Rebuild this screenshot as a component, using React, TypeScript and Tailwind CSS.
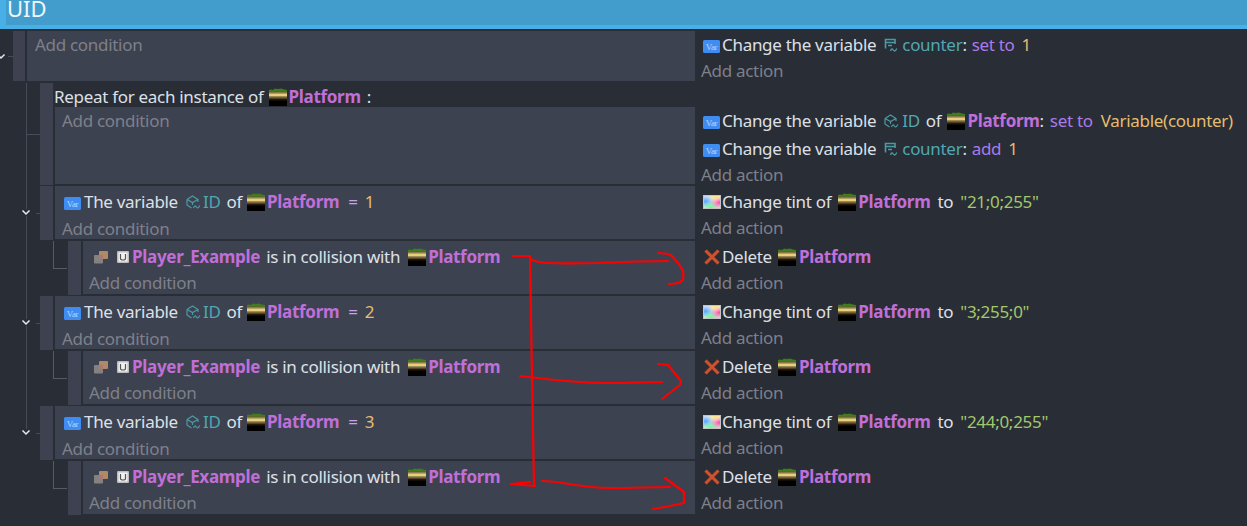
import React from 'react';

const PlatformIcon = () => (
  <svg width="18" height="18" viewBox="0 0 18 18" className="shrink-0">
    <rect y="11" width="18" height="7" fill="#000" />
    <path d="M0 4V2l2-.5 2 .5L6 .5l3 .5 3-.5 3 1 3 .5v2z" fill="#3f7d1e" />
    <rect y="3.500" width="18" height="1" fill="#6a5724" />
    <rect y="4.500" width="18" height="1" fill="#c4ad5e" />
    <rect y="5.500" width="18" height="3" fill="#e6d07e" />
    <rect y="8.500" width="18" height="1" fill="#b0944c" />
    <rect y="9.500" width="18" height="1" fill="#7f602c" />
    <rect y="10.500" width="18" height="1" fill="#4c3717" />
    <rect y="11.500" width="18" height="1" fill="#21170a" />
  </svg>
);

const VarIcon = () => (
  <svg width="17" height="13" viewBox="0 0 17 13" className="shrink-0 translate-y-[1px]">
    <rect width="17" height="13" rx="1.500" fill="#3f8df2" />
    <text x="8.500" y="9.500" textAnchor="middle" fontSize="9" fontFamily="Liberation Serif, serif" fill="#bcd8fb">Var</text>
  </svg>
);

const TintIcon = () => (
  <svg width="18" height="14" viewBox="0 0 18 14" className="shrink-0">
    <defs>
      <radialGradient id="tintBlue" cx="0.1" cy="0.45" r="0.6">
        <stop offset="0" stopColor="#58a4ff" />
        <stop offset="1" stopColor="#58a4ff" stopOpacity="0" />
      </radialGradient>
      <radialGradient id="tintGreen" cx="0.45" cy="1" r="0.6">
        <stop offset="0" stopColor="#5dff86" />
        <stop offset="1" stopColor="#5dff86" stopOpacity="0" />
      </radialGradient>
      <radialGradient id="tintPink" cx="0.95" cy="0.55" r="0.55">
        <stop offset="0" stopColor="#ff4fae" />
        <stop offset="1" stopColor="#ff4fae" stopOpacity="0" />
      </radialGradient>
      <radialGradient id="tintYellow" cx="0.7" cy="0.05" r="0.45">
        <stop offset="0" stopColor="#ffe27a" />
        <stop offset="1" stopColor="#ffe27a" stopOpacity="0" />
      </radialGradient>
    </defs>
    <rect width="18" height="14" fill="#c4c4c4" />
    <rect x="1" y="1" width="16" height="12" fill="#f4f4f4" />
    <rect x="1" y="1" width="16" height="12" fill="url(#tintBlue)" />
    <rect x="1" y="1" width="16" height="12" fill="url(#tintGreen)" />
    <rect x="1" y="1" width="16" height="12" fill="url(#tintPink)" />
    <rect x="1" y="1" width="16" height="12" fill="url(#tintYellow)" />
  </svg>
);

const DeleteIcon = () => (
  <svg width="18" height="18" viewBox="0 0 18 18" className="shrink-0">
    <path d="M2.500 2.500l13 13M15.500 2.500l-13 13" stroke="#3f2f2e" strokeWidth="5" />
    <path d="M2.500 2.500l13 13M15.500 2.500l-13 13" stroke="#cf5230" strokeWidth="3" />
  </svg>
);

const SceneVarIcon = () => (
  <svg width="14" height="14" viewBox="0 0 14 14" fill="none" stroke="#4c9ba4" strokeWidth="1.300" className="shrink-0">
    <path d="M1.500 10.500V1.500h9.500v4.500" strokeWidth="1.600" />
    <path d="M2 4.500h9M4 7.500h4" />
    <path d="M6.500 13c.8-2.500 1.800-2.500 2.800-1s2 1.500 3.500-1.500" />
  </svg>
);

const ObjectVarIcon = () => (
  <svg width="15" height="14" viewBox="0 0 15 14" fill="none" stroke="#4c9ba4" strokeWidth="1.200" className="shrink-0">
    <path d="M1 4.500L6.500 1 12 4.500V7M1 4.500V10l4.500 3M1 4.500l5.500 3 5.500-3M6.500 7.500V10" />
    <path d="M7.500 13c.8-2.500 1.800-2.500 2.800-1s2 1.500 3.500-1.500" />
  </svg>
);

const CollisionIcon = () => (
  <svg width="14" height="13" viewBox="0 0 14 13" className="shrink-0">
    <rect x="5" y="0" width="9" height="8" rx="1" fill="#b08a66" />
    <rect x="0" y="4" width="9" height="8.500" rx="1" fill="#85817f" />
    <rect x="5" y="4" width="4" height="4" fill="#a9797a" />
  </svg>
);

const PlayerIcon = () => (
  <svg width="12" height="12" viewBox="0 0 12 12" className="shrink-0">
    <rect width="12" height="12" rx="1" fill="#bdbdbd" />
    <rect x="1.500" y="1.500" width="9" height="9" fill="#f2f2f2" />
    <path d="M3.500 3v4.500c0 1 .8 1.500 2.500 1.500s2.500-.5 2.500-1.500V3" fill="none" stroke="#555" strokeWidth="1.200" />
  </svg>
);

const Chevron = () => (
  <svg width="10" height="7" viewBox="0 0 10 7" fill="none" stroke="#e8eaee" strokeWidth="1.500">
    <path d="M1.500 1.500L5 5l3.500-3.500" />
  </svg>
);

const Obj = () => <span className="font-bold text-[#c06fd8]">Platform</span>;
const AddLine = ({ label, h = 'h-[24px]' }: { label: string; h?: string }) => (
  <div className={`${h} flex items-center text-[#7d808a]`}>{label}</div>
);
const Line = ({ children, cls = '' }: { children: React.ReactNode; cls?: string }) => (
  <div className={`h-[28px] flex items-center whitespace-nowrap text-[#dde0e8] ${cls}`}>{children}</div>
);

const VarCondition = ({ n }: { n: number }) => (
  <Line cls="pl-[9px] pt-[4px]">
    <VarIcon />
    <span className="ml-[3px]">The variable</span>
    <span className="ml-[8px]"><ObjectVarIcon /></span>
    <span className="ml-[2px] text-[#4fa8b2]">ID</span>
    <span className="ml-[6px]">of</span>
    <span className="ml-[5px]"><PlatformIcon /></span>
    <span className="ml-[2px]"><Obj /></span>
    <span className="ml-[9px] text-[#c9a2e8]">=</span>
    <span className="ml-[7px] text-[#e5bd70]">{n}</span>
  </Line>
);

const Collision = () => (
  <Line cls="pl-[11px] pt-[4px]">
    <CollisionIcon />
    <span className="ml-[9px]"><PlayerIcon /></span>
    <span className="ml-[3px] font-bold text-[#c06fd8]">Player_Example</span>
    <span className="ml-[6px]">is in collision with</span>
    <span className="ml-[8px]"><PlatformIcon /></span>
    <span className="ml-[2px] font-bold text-[#c06fd8]">Platform</span>
  </Line>
);

const Tint = ({ value }: { value: string }) => (
  <Line cls="pl-[2px]">
    <TintIcon />
    <span className="ml-[1px]">Change tint of</span>
    <span className="ml-[7px]"><PlatformIcon /></span>
    <span className="ml-[2px]"><Obj /></span>
    <span className="ml-[7px]">to</span>
    <span className="ml-[7px] text-[#a3c76d]">{value}</span>
  </Line>
);

const Delete = () => (
  <Line cls="pl-[2px]">
    <DeleteIcon />
    <span className="ml-[1px]">Delete</span>
    <span className="ml-[6px]"><PlatformIcon /></span>
    <span className="ml-[3px]"><Obj /></span>
  </Line>
);

const SetVar = ({ verb, value }: { verb: string; value: string }) => (
  <Line cls="pl-[2px]">
    <VarIcon />
    <span className="ml-[2px]">Change the variable</span>
    <span className="ml-[8px]"><SceneVarIcon /></span>
    <span className="ml-[4px] text-[#4fa8b2]">counter</span>
    <span>:</span>
    <span className="ml-[5px] text-[#a97bea]">{verb}</span>
    <span className="ml-[7px] text-[#e5bd70]">{value}</span>
  </Line>
);

// handle + condition cell, the left part of every event
const Event = ({
  indent,
  height,
  head,
  gutter,
  condition,
  action,
}: {
  indent: string;
  height: string;
  head?: React.ReactNode;
  gutter?: React.ReactNode;
  condition: React.ReactNode;
  action: React.ReactNode;
}) => (
  <div className={`flex ${height}`}>
    <div className="flex w-[695px] shrink-0">
      <div className={`relative shrink-0 ${indent}`}>{gutter}</div>
      <div className="w-[13px] shrink-0 mb-[1px] bg-[#3d4150]" />
      <div className="flex-1 min-w-0 flex flex-col ml-[1px]">
        {head}
        <div className="flex-1 bg-[#3d4250] ml-[1px] mb-[2px]">{condition}</div>
      </div>
    </div>
    <div className="flex-1 pl-[6px] pt-[2px]">{action}</div>
  </div>
);

const Branch = ({ last }: { last?: boolean }) => (
  <>
    <div className={`absolute left-[26px] top-0 w-px bg-[#474b58] ${last ? 'h-[24px]' : 'bottom-0'}`} />
    <div className="absolute right-0 top-[27px] h-px w-[4px] bg-[#474b58]" />
    <div className="absolute left-[21px] top-[23px] bg-[#292d36] flex">
      <Chevron />
    </div>
  </>
);

const SubBranch = ({ last }: { last?: boolean }) => (
  <>
    {!last && <div className="absolute left-[26px] top-0 bottom-0 w-px bg-[#474b58]" />}
    <div className="absolute left-[53px] top-0 h-[28px] w-[14px] border-l border-b border-[#565a68]" />
  </>
);

const Group = ({ n, tint, last }: { n: number; tint: string; last?: boolean }) => (
  <>
    <Event
      indent="w-[40px]"
      height="h-[55px]"
      gutter={<Branch last={last} />}
      condition={
        <>
          <VarCondition n={n} />
          <AddLine label="Add condition" h="h-[25px] pl-[7px] pt-[4px]" />
        </>
      }
      action={
        <>
          <Tint value={tint} />
          <AddLine label="Add action" />
        </>
      }
    />
    <Event
      indent="w-[68px]"
      height="h-[55px]"
      gutter={<SubBranch last={last} />}
      condition={
        <>
          <Collision />
          <AddLine label="Add condition" h="h-[25px] pl-[6px] pt-[3px]" />
        </>
      }
      action={
        <>
          <Delete />
          <AddLine label="Add action" />
        </>
      }
    />
  </>
);

export default function App() {
  return (
    <div className="relative h-[526px] w-[1247px] overflow-hidden bg-[#292d36] font-['Noto_Sans',sans-serif] text-[17px] tracking-[-0.3px]">
      <div className="h-[29px] border-l-[6px] border-b-4 border-[#48b0e6] bg-[#429dcc] pl-[1px] text-[22px] leading-[17px] tracking-normal text-[#eef7fc]">
        UID
      </div>
      <div className="pt-[2px]">
        <div className="flex h-[52px]">
          <div className="flex w-[695px] shrink-0">
            <div className="relative w-[13px] shrink-0">
              <div className="absolute -left-[4px] top-[22px]"><Chevron /></div>
              <div className="absolute left-[8px] top-[25px] h-px w-[5px] bg-[#474b58]" />
            </div>
            <div className="w-[12px] shrink-0 bg-[#3d4150] mb-[2px]" />
            <div className="ml-[2px] flex-1 bg-[#3d4250] mb-[2px] pl-[8px]">
              <AddLine label="Add condition" h="h-[28px]" />
            </div>
          </div>
          <div className="flex-1 pl-[6px]">
            <SetVar verb="set to" value="1" />
            <AddLine label="Add action" />
          </div>
        </div>

        <Event
          indent="w-[40px]"
          height="h-[103px]"
          gutter={<div className="absolute left-[26px] top-0 bottom-0 w-px bg-[#474b58]"><div className="absolute left-0 top-[51px] h-px w-[14px] bg-[#474b58]" /></div>}
          head={
            <div className="h-[24px] pt-[3px] flex items-center whitespace-nowrap text-[#dde0e8]">
              <span>Repeat for each instance of</span>
              <span className="ml-[5px]"><PlatformIcon /></span>
              <span className="ml-[2px]"><Obj /></span>
              <span className="ml-[6px]">:</span>
            </div>
          }
          condition={<AddLine label="Add condition" h="h-[28px] pl-[7px]" />}
          action={
            <div className="pt-[22px]">
              <Line cls="pl-[2px]">
                <VarIcon />
                <span className="ml-[2px]">Change the variable</span>
                <span className="ml-[8px]"><ObjectVarIcon /></span>
                <span className="ml-[3px] text-[#4fa8b2]">ID</span>
                <span className="ml-[6px]">of</span>
                <span className="ml-[6px]"><PlatformIcon /></span>
                <span className="ml-[2px]"><Obj /></span>
                <span>:</span>
                <span className="ml-[6px] text-[#a97bea]">set to</span>
                <span className="ml-[8px] text-[#e5bd70]">Variable(counter)</span>
              </Line>
              <SetVar verb="add" value="1" />
              <AddLine label="Add action" />
            </div>
          }
        />

        <Group n={1} tint={'"21;0;255"'} />
        <Group n={2} tint={'"3;255;0"'} />
        <Group n={3} tint={'"244;0;255"'} last />
      </div>

      {/* red marker scribbles drawn over the screenshot */}
      <svg className="absolute inset-0" width="1247" height="526" fill="none" stroke="#f00" strokeWidth="2.200" strokeLinejoin="round" strokeLinecap="round">
        <path d="M513 256h17l2 121 2 109" />
        <path d="M530 259c6 3 12 4 20 4 16 1 30 0 47 0 24-1 48-2 71-2" />
        <path d="M658 253c6 0 11 1 14 3 4 5 9 10 11 15 1 3 0 6 0 9-3 3-8 4-14 4" />
        <path d="M520 376c20 2 40 5 60 6 12 1 22 1 33 1 16 0 33-1 49-1" />
        <path d="M658 364l10 1 13 16-1 4-18 14" />
        <path d="M511 484l19-2M511 484l24 2" />
        <path d="M542 481c7 0 14 1 21 2 16 3 33 5 50 5 19 0 38-1 57-1" />
        <path d="M665 478l19 14v11l-14 3-17 3" />
      </svg>
    </div>
  );
}
